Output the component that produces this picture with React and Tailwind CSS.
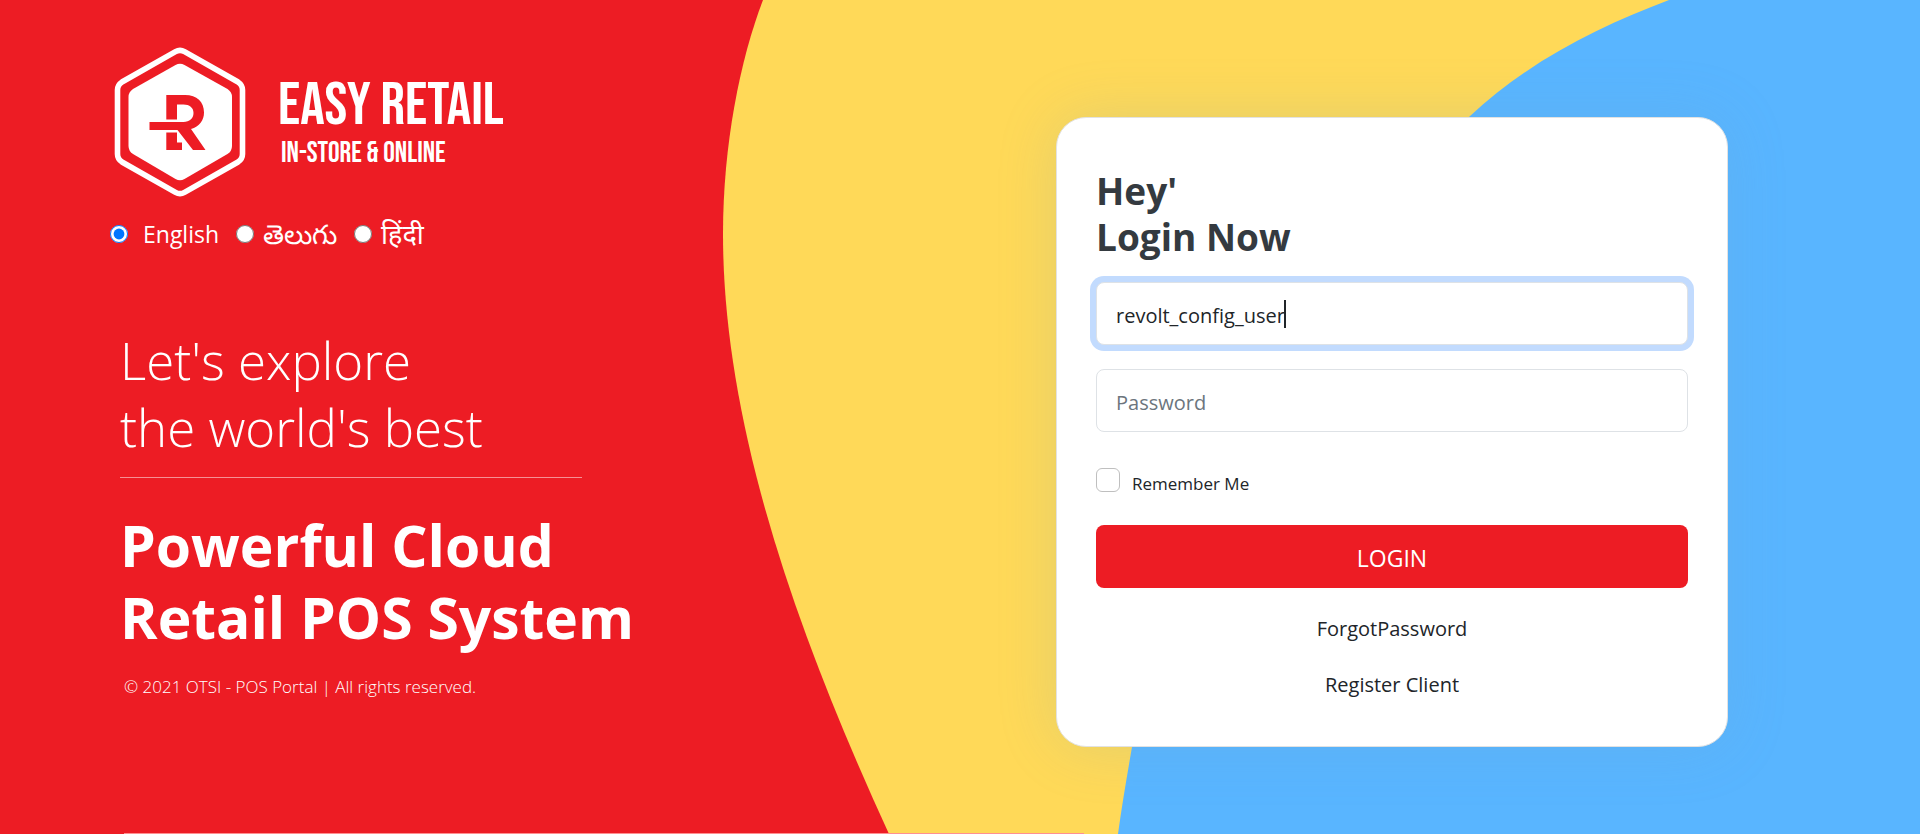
import { useState } from "react";

function Backdrop() {
  return (
    <svg
      className="absolute inset-0 h-full w-full"
      viewBox="0 0 1920 834"
      preserveAspectRatio="none"
      aria-hidden="true"
    >
      <path
        fill="#ffd958"
        d="M763 0C740 60 723 145 723 234C723 430 800 640 889 834H1920V0Z"
      />
      <path
        fill="#59b5ff"
        d="M1669 0C1600 26 1530 60 1469 117C1300 285 1170 500 1132 747C1127 776 1122 805 1118 834H1920V0Z"
      />
    </svg>
  );
}

function LogoMark() {
  return (
    <svg className="h-[150px] w-[132px] shrink-0" viewBox="0 0 132 150" aria-hidden="true">
      <path
        d="M61.5 4.6Q66 2 70.5 4.6L124 35Q128.5 38 128.5 43V107Q128.5 112 124 115L70.5 145.4Q66 148 61.5 145.4L8 115Q3.5 112 3.5 107V43Q3.5 38 8 35Z"
        fill="none"
        stroke="#fff"
        strokeWidth="5.6"
      />
      <path
        d="M61.5 18Q66 15.5 70.5 18L113.5 42Q118 45 118 50V99Q118 104 113.5 107L70.5 132Q66 134.5 61.5 132L19 107Q14.5 104 14.5 99V50Q14.5 45 19 42Z"
        fill="#fff"
      />
      <g fill="#ed1c24">
        <path d="M52.3 48H71C83 48 90 55 90 65.5C90 73.5 85.5 79.5 77 82L91.5 103H79L63.5 83H35.5V75H69.5C75.5 75 79.5 71.5 79.5 66C79.5 60.5 75.5 57.5 69.5 57.5H63V72.5H52.3Z" />
        <path d="M52.3 85.5H63V95.5H68V103H52.3Z" />
      </g>
    </svg>
  );
}

const languages = [
  { id: "en", label: "English", gap: "gap-[15px]", text: "text-[23px]" },
  { id: "te", label: "తెలుగు", gap: "gap-[9px]", text: "text-[27px]" },
  { id: "hi", label: "हिंदी", gap: "gap-[9px]", text: "text-[27px]" },
];

function LanguagePicker() {
  const [lang, setLang] = useState("en");
  return (
    <div className="mt-[19px] ml-[-10px] flex items-center gap-[17px]" role="radiogroup" aria-label="Language">
      {languages.map((l) => (
        <div key={l.id} className={`flex items-center ${l.gap}`}>
          <input
            type="radio"
            id={l.id}
            name="language"
            checked={lang === l.id}
            onChange={() => setLang(l.id)}
            className="m-0 size-[18px] accent-[#0075ff]"
          />
          <label htmlFor={l.id} className={`leading-9 ${l.text}`}>
            {l.label}
          </label>
        </div>
      ))}
    </div>
  );
}

function Intro() {
  return (
    <section className="flex w-[55%] flex-col items-start pt-[47px] pl-[120px] text-white">
      <div className="ml-[-6px] flex items-center gap-8">
        <LogoMark />
        <div className="font-['Bebas_Neue','Noto_Sans_CJK_SC',sans-serif]">
          <div className="text-[61px] leading-[64px]">EASY RETAIL</div>
          <div className="pl-[3px] text-[29px] leading-8">IN-STORE &amp; ONLINE</div>
        </div>
      </div>
      <LanguagePicker />
      <h2 className="mt-[75px] text-[51px] leading-[67px] font-light">
        Let's explore
        <br />
        the world's best
      </h2>
      <hr className="mt-4 w-[462px] border-0 border-t border-[#f69094]" />
      <h1 className="mt-[31px] text-[57px] leading-[72px] font-bold">
        Powerful Cloud
        <br />
        Retail POS System
      </h1>
      <p className="mt-[22px] ml-1 text-[17px] leading-6 font-light">
        © 2021 OTSI - POS Portal | All rights reserved.
      </p>
    </section>
  );
}

function LoginCard() {
  const [user, setUser] = useState("revolt_config_user");
  const [focused, setFocused] = useState(true);
  return (
    <form
      onSubmit={(e) => e.preventDefault()}
      className="flex w-[35vw] flex-col rounded-[30px] border border-[#e2e2e2] bg-white px-[39px] pt-[50px] pb-[46px] text-[#212529] shadow-[0_0_60px_rgba(110,165,195,0.2)]"
    >
      <h2 className="text-[37px] leading-[46px] font-bold text-[#343a40]">
        Hey'
        <br />
        Login Now
      </h2>
      <div className="relative mt-[22px]">
        <input
          type="text"
          aria-label="User name"
          value={user}
          autoFocus
          onFocus={() => setFocused(true)}
          onBlur={() => setFocused(false)}
          onChange={(e) => setUser(e.target.value)}
          className="block h-[63px] w-full rounded-lg border border-[#dee2e6] bg-white px-[19px] pt-[3px] text-[20px] caret-transparent ring-6 ring-[#c2dbfe] outline-none"
        />
        {focused && (
          <div className="pointer-events-none absolute inset-0 flex items-center px-[19px] text-[20px]" aria-hidden="true">
            <span className="invisible whitespace-pre">{user}</span>
            <span className="h-7 w-[2px] bg-[#212529]" />
          </div>
        )}
      </div>
      <input
        type="password"
        aria-label="Password"
        placeholder="Password"
        className="mt-6 block h-[63px] w-full rounded-lg border border-[#dee2e6] bg-white px-[19px] pt-[3px] text-[20px] outline-none placeholder:text-[#6c757d]"
      />
      <div className="mt-9 flex h-6 items-center gap-3">
        <input
          type="checkbox"
          id="remember"
          className="m-0 size-6 appearance-none rounded-md border border-[#bfbfbf] bg-white checked:bg-[#ed1c24]"
        />
        <label htmlFor="remember" className="pt-[7px] text-[17px] leading-5">
          Remember Me
        </label>
      </div>
      <button type="submit" className="mt-[33px] h-[63px] w-full rounded-lg bg-[#ed1c24] pt-1 text-[23px] text-white">
        LOGIN
      </button>
      <div className="mt-[26px] flex flex-col items-center gap-[26px] text-[20px] leading-[30px]">
        <a href="#forgot">ForgotPassword</a>
        <a href="#register">Register Client</a>
      </div>
    </form>
  );
}

export default function App() {
  return (
    <main className="relative flex min-h-screen flex-col overflow-hidden bg-[#ed1c24] font-['Open_Sans','Noto_Sans',sans-serif]">
      <Backdrop />
      <div className="relative flex flex-1 items-start">
        <Intro />
        <div className="flex flex-1 pt-[117px]">
          <LoginCard />
        </div>
      </div>
      <hr className="relative ml-[124px] w-1/2 border-0 border-t border-[#ff8f91]" />
    </main>
  );
}
